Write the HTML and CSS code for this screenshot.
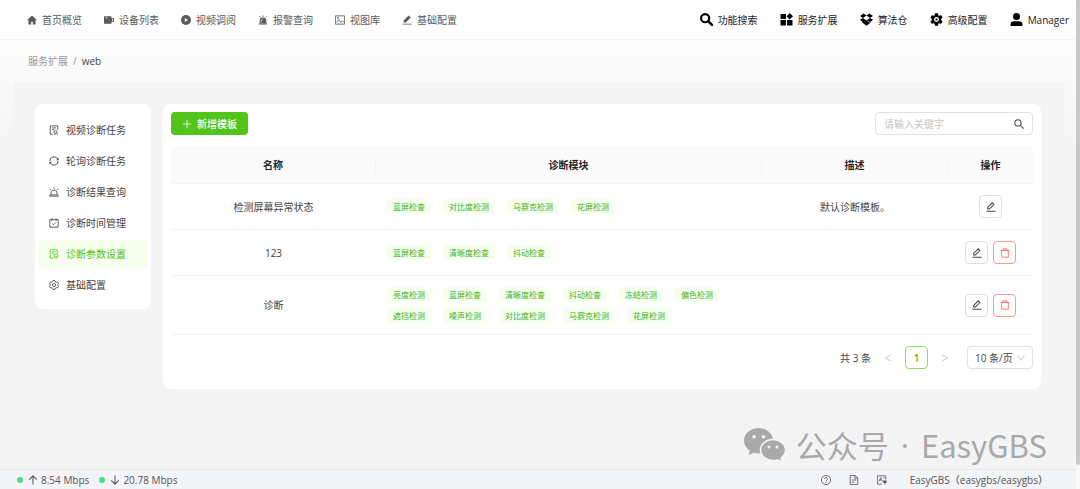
FILE: index.html
```html
<!DOCTYPE html>
<html lang="zh-CN">
<head>
<meta charset="utf-8">
<meta name="viewport" content="width=device-width, initial-scale=1">
<title>EasyGBS</title>
<link rel="stylesheet" href="styles.css">
</head>
<body>
<svg class="sprite" aria-hidden="true">
  <symbol id="i-edit" viewBox="0 0 24 24"><path d="M1 22h22M4 17v-4L15 2l4 4L8 17z" fill="none" stroke="currentColor" stroke-width="2.500"/></symbol>
  <symbol id="i-trash" viewBox="0 0 24 24"><path d="M1 6h22M7 6V2h10v4M4 7v15h16V7" fill="none" stroke="currentColor" stroke-width="2.200"/></symbol>
  <symbol id="i-cog" viewBox="0 0 24 24"><path d="M12 16a4 4 0 1 1 0-8 4 4 0 0 1 0 8m7.430-3.030c.04-.32.07-.64.07-.97s-.03-.66-.07-1l2.110-1.630c.19-.15.24-.42.12-.64l-2-3.460c-.12-.22-.39-.31-.61-.22l-2.490 1c-.52-.39-1.060-.73-1.690-.98l-.37-2.650A.5.5 0 0 0 14 2h-4a.5.5 0 0 0-.5.42l-.37 2.650c-.63.25-1.170.59-1.690.98l-2.490-1c-.22-.09-.49 0-.61.22l-2 3.460c-.13.22-.07.49.12.64L4.570 11c-.04.34-.07.67-.07 1s.03.65.07.97l-2.110 1.660c-.19.15-.25.42-.12.64l2 3.460c.12.22.39.3.61.22l2.490-1.010c.52.4 1.060.74 1.690.99l.37 2.650c.04.24.25.42.5.42h4c.25 0 .46-.18.5-.42l.37-2.650c.63-.26 1.170-.59 1.690-.99l2.490 1.010c.22.08.49 0 .61-.22l2-3.460c.12-.22.07-.49-.12-.64z" fill="currentColor"/><circle cx="12" cy="12" r="1.800" fill="currentColor"/></symbol>
</svg>
<div class="shell">
  <div class="app">
    <header class="topbar">
      <nav class="nav">
        <a href="#"><svg viewBox="0 0 24 24"><path d="M12 1 0 12.500h3.500V23H10v-7h4v7h6.500V12.500H24z" fill="currentColor"/></svg>首页概览</a>
        <a href="#"><svg viewBox="0 0 24 24"><path d="M1 3h16a1 1 0 0 1 1 1v3h5a1 1 0 0 1 1 1v8a1 1 0 0 1-1 1h-5v3a1 1 0 0 1-1 1H1a1 1 0 0 1-1-1V4a1 1 0 0 1 1-1z" fill="currentColor"/><path d="M4 7h4M20.500 9v6" stroke="#fff" stroke-width="2"/></svg>设备列表</a>
        <a href="#"><svg viewBox="0 0 24 24"><circle cx="12" cy="12" r="12" fill="currentColor"/><path d="M9 7v10l8-5z" fill="#fff"/></svg>视频调阅</a>
        <a href="#"><svg viewBox="0 0 24 24"><path d="M4 19v-5a8 8 0 0 1 16 0v5zM2 20h20v3H2z" fill="currentColor"/><path d="M12 1v4M3 3l3 3M21 3l-3 3" stroke="currentColor" stroke-width="2"/><path d="M8 18v-4a4 4 0 0 1 4-4" stroke="#fff" fill="none" stroke-width="1.500"/></svg>报警查询</a>
        <a href="#"><svg viewBox="0 0 24 24"><g fill="none" stroke="currentColor" stroke-width="2"><path d="M1 2h22v20H1zM2 18l7-7 5 7 4-4 4 4"/><circle cx="7" cy="7" r="1.500"/></g></svg>视图库</a>
        <a href="#"><svg viewBox="0 0 24 24"><path d="M1 21h22v2H1zM4 18v-5L16 1l5 5L9 18z" fill="currentColor"/></svg>基础配置</a>
      </nav>
      <nav class="nav tools">
        <a href="#"><svg viewBox="0 0 24 24"><circle cx="9.500" cy="9.500" r="7.500" fill="none" stroke="currentColor" stroke-width="4"/><path d="m15 15 7 7" stroke="currentColor" stroke-width="4.500" stroke-linecap="round"/></svg>功能搜索</a>
        <a href="#"><svg viewBox="0 0 24 24"><path d="M1 2h10v9H1zM1 13h10v10H1zM13 13h10v10H13zM18 0l6 6-6 6-6-6z" fill="currentColor"/></svg>服务扩展</a>
        <a href="#"><svg viewBox="0 0 24 24"><path d="M6.500 1 12 4.500 5.500 9 0 5.500zM17.500 1 24 5.500 18.500 9 12 4.500zM0 12.500 5.500 9l6.500 5-5.500 4zM24 12.500 18.500 9 12 14l5.500 4zM4 17.500l8-4 8 4-8 6z" fill="currentColor"/></svg>算法仓</a>
        <a href="#"><svg viewBox="1.500 1.500 21 21"><use href="#i-cog" width="24" height="24"/></svg>高级配置</a>
        <a href="#"><svg viewBox="0 0 24 24"><path d="M12 0a6.500 6.500 0 1 1 0 13 6.500 6.500 0 0 1 0-13M1 24v-3c0-4 3-6 6-6h10c3 0 6 2 6 6v3z" fill="currentColor"/></svg>Manager</a>
      </nav>
    </header>
    <nav class="crumbs"><a href="#">服务扩展</a><span>/</span><strong>web</strong></nav>
    <div class="content">
      <aside class="side">
        <a href="#"><svg viewBox="0 0 24 24"><g fill="none" stroke="currentColor" stroke-width="2"><path d="M9 22H3V2h18v10M7 7h10M7 11h5M18 20l4 3M12 22h4"/><circle cx="15.500" cy="16.500" r="3.500"/></g></svg>视频诊断任务</a>
        <a href="#"><svg viewBox="0 0 24 24"><path d="M2 12A10 10 0 0 1 21 7.500M22 12A10 10 0 0 1 3 16.500" fill="none" stroke="currentColor" stroke-width="2.200"/><path d="M23 4v6h-6zM1 20v-6h6z" fill="currentColor"/></svg>轮询诊断任务</a>
        <a href="#"><svg viewBox="0 0 24 24"><path d="M5 18v-6l3-4h8l3 4v6M2 22v-3h20v3zM12 1v4M2 4l3 3M22 4l-3 3" fill="none" stroke="currentColor" stroke-width="2"/></svg>诊断结果查询</a>
        <a href="#"><svg viewBox="0 0 24 24"><path d="M2 4h20v18H2zM7 1v6M17 1v6M8 13l3 3 5-5" fill="none" stroke="currentColor" stroke-width="2"/></svg>诊断时间管理</a>
        <a href="#" class="active"><svg viewBox="0 0 24 24"><g fill="none" stroke="currentColor" stroke-width="2"><path d="M10 22H3V2h17v9M7 7h9M7 11h5"/><circle cx="17" cy="17" r="5"/><path d="m15 17 2 2 3-3"/></g></svg>诊断参数设置</a>
        <a href="#"><svg viewBox="0 0 24 24"><g fill="none" stroke="currentColor" stroke-width="2"><path d="M9.500 1.500h5l1 3 2 1 3-.5 2.500 4-2 2.500v1l2 2.500-2.500 4-3-.5-2 1-1 3h-5l-1-3-2-1-3 .5L1 15l2-2.500v-1L1 9l2.500-4 3 .5 2-1z"/><circle cx="12" cy="12" r="3.800"/></g></svg>基础配置</a>
      </aside>
      <main class="card">
        <div class="actions">
          <button class="add" type="button"><svg viewBox="0 0 24 24"><path d="M12 2v20M2 12h20" stroke="currentColor" stroke-width="2"/></svg>新增模板</button>
          <div class="search">
            <input type="text" placeholder="请输入关键字" aria-label="关键字">
            <button type="button" aria-label="搜索"><svg viewBox="0 0 24 24"><circle cx="9.500" cy="9.500" r="7.500" fill="none" stroke="currentColor" stroke-width="2.500"/><path d="m15 15 8 8" stroke="currentColor" stroke-width="2.500"/></svg></button>
          </div>
        </div>
        <table class="grid">
          <colgroup><col class="c-name"><col><col class="c-desc"><col class="c-ops"></colgroup>
          <thead><tr><th><span>名称</span></th><th><span>诊断模块</span></th><th><span>描述</span></th><th><span>操作</span></th></tr></thead>
          <tbody>
            <tr>
              <td>检测屏幕异常状态</td>
              <td><div class="tags"><span>蓝屏检查</span><span>对比度检测</span><span>马赛克检测</span><span>花屏检测</span></div></td>
              <td>默认诊断模板。</td>
              <td><div class="ops"><button type="button" aria-label="编辑"><svg><use href="#i-edit"/></svg></button></div></td>
            </tr>
            <tr>
              <td>123</td>
              <td><div class="tags"><span>蓝屏检查</span><span>清晰度检查</span><span>抖动检查</span></div></td>
              <td></td>
              <td><div class="ops"><button type="button" aria-label="编辑"><svg><use href="#i-edit"/></svg></button><button class="danger" type="button" aria-label="删除"><svg><use href="#i-trash"/></svg></button></div></td>
            </tr>
            <tr>
              <td>诊断</td>
              <td><div class="tags"><span>亮度检测</span><span>蓝屏检查</span><span>清晰度检查</span><span>抖动检查</span><span>冻结检测</span><span>偏色检测</span><span>遮挡检测</span><span>噪声检测</span><span>对比度检测</span><span>马赛克检测</span><span>花屏检测</span></div></td>
              <td></td>
              <td><div class="ops"><button type="button" aria-label="编辑"><svg><use href="#i-edit"/></svg></button><button class="danger" type="button" aria-label="删除"><svg><use href="#i-trash"/></svg></button></div></td>
            </tr>
          </tbody>
        </table>
        <div class="pager">
          <span>共 3 条</span>
          <button class="arrow" type="button" aria-label="上一页"><svg viewBox="0 0 24 24"><path d="M20 3 4 12l16 9" fill="none" stroke="currentColor" stroke-width="2.500"/></svg></button>
          <button class="page" type="button">1</button>
          <button class="arrow" type="button" aria-label="下一页"><svg viewBox="0 0 24 24"><path d="m4 3 16 9-16 9" fill="none" stroke="currentColor" stroke-width="2.500"/></svg></button>
          <div class="size">
            <select aria-label="每页条数"><option>10 条/页</option></select>
            <svg viewBox="0 0 24 24"><path d="m2 4 10 15L22 4" fill="none" stroke="currentColor" stroke-width="2.500"/></svg>
          </div>
        </div>
      </main>
    </div>
    <footer class="status">
      <div class="rates">
        <i></i><span><svg viewBox="0 0 24 24"><path d="M12 23V2M3 11l9-9 9 9" fill="none" stroke="currentColor" stroke-width="2.500"/></svg>8.54 Mbps</span>
        <i></i><span><svg viewBox="0 0 24 24"><path d="M12 1v21M3 13l9 9 9-9" fill="none" stroke="currentColor" stroke-width="2.500"/></svg>20.78 Mbps</span>
      </div>
      <div class="links">
        <svg viewBox="0 0 24 24"><g fill="none" stroke="currentColor" stroke-width="2"><circle cx="12" cy="12" r="11"/><path d="M8.500 9.500a3.500 3.500 0 1 1 5 3c-1 .5-1.500 1-1.500 2.500M12 16.500v2.500"/></g></svg>
        <svg viewBox="0 0 24 24"><path d="M3 1h12l6 6v16H3zM14 1v7h7M7 12h10M7 17h6" fill="none" stroke="currentColor" stroke-width="2"/></svg>
        <svg viewBox="0 0 24 24"><path d="M12 22H1V2h20v9M5 15l4-9 4 9M7 12h4M15 7h3" fill="none" stroke="currentColor" stroke-width="2"/><path d="M15 13h8v6h-3v4h-2v-4h-3z" fill="currentColor"/></svg>
        <strong>EasyGBS（easygbs/easygbs）</strong>
      </div>
    </footer>
  </div>
  <div class="track"><div class="thumb"></div></div>
</div>
<div class="watermark">
  <svg viewBox="0 0 42 34"><path d="M14.500 0C22.500 0 29 5.600 29 12.700S22.500 25.500 14.500 25.500c-1.700 0-3.300-.3-4.700-.7L5 27l.6-4.500C2.200 20.200 0 16.700 0 12.700 0 5.600 6.500 0 14.500 0z" fill="currentColor"/><path d="M29 11.500c7 0 12.500 4.700 12.500 10.500 0 3.300-1.700 6.100-4.300 8l.5 4-4-2.200c-1.500.5-3 .7-4.700.7-7 0-12.500-4.700-12.500-10.500S22 11.500 29 11.500z" fill="currentColor" stroke="#f4f4f4" stroke-width="1.500"/><g fill="#f4f4f4"><circle cx="10" cy="8.800" r="1.800"/><circle cx="19.500" cy="8.800" r="1.800"/><circle cx="25" cy="19" r="1.500"/><circle cx="33" cy="19" r="1.500"/></g></svg>
  <span>公众号</span><span class="dot">·</span><span>EasyGBS</span>
</div>
</body>
</html>
```
FILE: styles.css
```css
* { box-sizing: border-box; }
body {
  margin: 0;
  font: 10px/16px "Open Sans", "Noto Sans CJK SC", sans-serif;
  color: #444;
  background: #f4f4f4;
}
a { color: inherit; text-decoration: none; }
button, input, select { font: inherit; color: inherit; margin: 0; }
svg { width: 10px; height: 10px; flex: none; display: block; }
.sprite { position: absolute; width: 0; height: 0; }

.shell { display: flex; min-height: 100vh; }
.app {
  flex: 1;
  display: flex;
  flex-direction: column;
  background: linear-gradient(#fff, #f4f4f4 150px);
}
.track { width: 4px; background: #fafafa; }
.thumb { height: 95vh; background: #c9c9c9; border-radius: 0 0 2px 2px; }

.topbar {
  display: flex;
  justify-content: space-between;
  align-items: center;
  height: 40px;
  padding: 0 7px 0 27px;
  background: linear-gradient(#fff, #fdfdfd);
  border-bottom: 1px solid #f4f4f4;
}
.nav { display: flex; gap: 22px; color: #5a5a5a; }
.nav a { display: flex; align-items: center; gap: 5px; white-space: nowrap; }
.tools { color: #222; }
.tools svg { width: 13px; height: 13px; color: #000; }

.crumbs { display: flex; gap: 5px; padding: 13px 28px; color: #999; }
.crumbs strong { font-weight: 400; color: #444; }

.content {
  flex: 1;
  display: flex;
  align-items: flex-start;
  gap: 12px;
  margin: 0 12px 0 13px;
  padding: 22px 23px 22px 22px;
  background: #f4f4f4;
}
.side {
  width: 116px;
  display: grid;
  gap: 3px;
  padding: 12px 3px 10px;
  background: #fff;
  border-radius: 8px;
}
.side a {
  display: flex;
  align-items: center;
  gap: 7px;
  height: 28px;
  padding-left: 11px;
  border-radius: 5px;
}
.side .active { color: #52c41a; background: #f6ffed; }

.card { flex: 1; padding: 8px 8px 20px; background: #fff; border-radius: 8px; }
.actions { display: flex; justify-content: space-between; margin-bottom: 11px; }
.add {
  display: flex;
  align-items: center;
  gap: 5px;
  height: 23px;
  padding: 0 11px;
  color: #fff;
  font-weight: 500;
  background: #52c41a;
  border: 0;
  border-radius: 4px;
}
.search {
  display: flex;
  align-items: center;
  width: 158px;
  height: 23px;
  padding: 0 8px;
  border: 1px solid #e3e3e3;
  border-radius: 4px;
}
.search input { flex: 1; min-width: 0; padding: 0; border: 0; outline: 0; background: none; }
.search input::placeholder { color: #c4c4c4; }
.search button { padding: 0; border: 0; background: none; }

.grid { width: 100%; table-layout: fixed; border-collapse: separate; border-spacing: 0; text-align: center; }
.c-name { width: 205px; }
.c-desc { width: 186px; }
.c-ops { width: 85px; }
.grid th { height: 38px; padding: 0; color: #222; font-weight: 600; background: #fafafa; border-bottom: 1px solid #f3f3f3; }
.grid th span { display: block; border-right: 1px solid #f3f3f3; }
.grid th:last-child span { border-right: 0; }
.grid th:first-child { border-radius: 6px 0 0 0; }
.grid th:last-child { border-radius: 0 6px 0 0; }
.grid td { padding: 11px; border-bottom: 1px solid #f3f3f3; }
.tags { display: flex; flex-wrap: wrap; gap: 6px 12px; }
.tags span {
  padding: 0 6px;
  font-size: 8px;
  line-height: 15px;
  color: #46ae1c;
  background: #f6ffed;
  border-radius: 3px;
}
.ops { display: flex; justify-content: center; gap: 5px; }
.ops button, .page {
  display: grid;
  place-items: center;
  width: 23px;
  height: 23px;
  padding: 0;
  background: #fff;
  border: 1px solid #e0e0e0;
  border-radius: 4px;
}
.ops .danger { color: #ff6b6b; border-color: #ff9494; }

.pager { display: flex; justify-content: flex-end; align-items: center; margin-top: 11px; }
.arrow { width: 34px; height: 23px; display: grid; place-items: center; padding: 0; border: 0; background: none; color: #bbb; }
.arrow svg, .size svg { width: 8px; height: 8px; }
.pager .page { color: #52c41a; border-color: #8fdb69; font-weight: 600; }
.size { display: grid; align-items: center; width: 66px; margin-left: 5px; }
.size select, .size svg { grid-area: 1 / 1; }
.size select { appearance: none; width: 100%; height: 23px; padding: 0 7px; background: #fff; border: 1px solid #e3e3e3; border-radius: 4px; }
.size svg { justify-self: end; margin-right: 8px; color: #bbb; pointer-events: none; }

.status {
  display: flex;
  justify-content: space-between;
  align-items: center;
  height: 20px;
  padding: 0 28px 0 17px;
  color: #555;
  font-weight: 500;
  background: #f3f4f7;
  border-top: 1px solid #e8e8e8;
}
.rates, .links, .rates span { display: flex; align-items: center; }
.rates { gap: 5px; }
.rates span { gap: 3px; }
.rates span + i { margin-left: 5px; }
.rates i { width: 6px; height: 6px; border-radius: 50%; background: #4ade80; }
.links { gap: 18px; }
.links strong { margin-left: 5px; font-weight: 500; }

.watermark {
  position: absolute;
  right: 33px;
  bottom: 22px;
  display: flex;
  align-items: center;
  gap: 10px;
  font: 31px/44px "Noto Sans CJK SC", sans-serif;
  color: #a9a9a9;
}
.watermark svg { width: 42px; height: 34px; }
.watermark .dot { padding: 0 2px; font-family: "Open Sans", sans-serif; }
```
